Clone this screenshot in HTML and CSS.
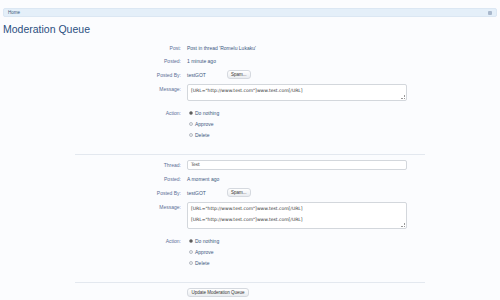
FILE: index.html
```html
<!DOCTYPE html>
<html>
    <head>
        <meta charset="utf-8">
        <title>Moderation Queue</title>
        <link rel="stylesheet" href="styles.css">
    </head>
    <body>
        <div class="breadcrumb">
            <span class="crumb">Home</span>
            <span class="jump"></span>
        </div>
        <h1 class="title">Moderation Queue</h1>

        <form class="queue">
            <div class="item">
                <div class="row"><span class="label">Post:</span><span class="value">Post in thread 'Romelu Lukaku'</span></div>
                <div class="row"><span class="label">Posted:</span><span class="value">1 minute ago</span></div>
                <div class="row"><span class="label">Posted By:</span><span class="value"><span class="user">testGOT</span><span class="btn">Spam...</span></span></div>
                <div class="row msg"><span class="label">Message:</span><div class="textarea short">[URL="http://www.test.com"]www.test.com[/URL]</div></div>
                <div class="row act"><span class="label">Action:</span>
                    <div class="radios">
                        <div class="radio"><span class="dot on"></span>Do nothing</div>
                        <div class="radio"><span class="dot"></span>Approve</div>
                        <div class="radio"><span class="dot"></span>Delete</div>
                    </div>
                </div>
            </div>

            <div class="item">
                <div class="row"><span class="label">Thread:</span><div class="input">Test</div></div>
                <div class="row"><span class="label">Posted:</span><span class="value">A moment ago</span></div>
                <div class="row"><span class="label">Posted By:</span><span class="value"><span class="user">testGOT</span><span class="btn">Spam...</span></span></div>
                <div class="row msg"><span class="label">Message:</span><div class="textarea tall">[URL="http://www.test.com"]www.test.com[/URL]<br>[URL="http://www.test.com"]www.test.com[/URL]</div></div>
                <div class="row act"><span class="label">Action:</span>
                    <div class="radios">
                        <div class="radio"><span class="dot on"></span>Do nothing</div>
                        <div class="radio"><span class="dot"></span>Approve</div>
                        <div class="radio"><span class="dot"></span>Delete</div>
                    </div>
                </div>
            </div>

            <div class="submit">
                <span class="btn wide">Update Moderation Queue</span>
            </div>
        </form>
    </body>
</html>
```

FILE: styles.css
```css
*{
    box-sizing: border-box;
    margin: 0px;
    padding: 0px;
}
body
{
    background: #fbfcfe;
    font-family: "Liberation Sans", sans-serif;
    font-size: 5px;
    color: #2b485c;
    padding: 8px 3px 0 3px;
}
.breadcrumb
{
    height: 9px;
    background: #e4eff9;
    border: 1px solid #dbe7f3;
    border-radius: 2px;
    display: flex;
    align-items: center;
    justify-content: space-between;
    padding: 0 4px 0 4px;
}
.crumb
{
    color: #3a5577;
    font-size: 4.5px;
}
.jump
{
    width: 4px;
    height: 4px;
    background: #a9b8cc;
    border-radius: 1px;
}
.title
{
    font-family: "Liberation Sans", sans-serif;
    font-weight: normal;
    font-size: 10.5px;
    color: #2b4f7e;
    margin-top: 6px;
    line-height: 12px;
}
.queue
{
    width: 350px;
    margin: 9px 0 0 72px;
}
.item
{
    border-bottom: 1px solid #e3e8ef;
    padding-bottom: 10px;
    margin-bottom: 5px;
}
.row
{
    display: grid;
    grid-template-columns: 106px 220px;
    column-gap: 6px;
    line-height: 8px;
    margin-bottom: 5px;
    align-items: center;
}
.label
{
    text-align: right;
    color: #5b6f96;
}
.value
{
    color: #3b5880;
    display: flex;
    align-items: center;
}
.user
{
    width: 40px;
}
.btn
{
    display: inline-block;
    height: 9px;
    line-height: 8px;
    padding: 0 3px;
    font-size: 4.5px;
    color: #333;
    background: linear-gradient(#ffffff, #e9ecf0);
    border: 1px solid #d5d9df;
    border-radius: 3px;
}
.wide
{
    width: 62px;
    text-align: center;
    padding: 0;
}
.msg
{
    align-items: start;
}
.msg .label
{
    line-height: 11px;
}
.textarea, .input
{
    background: #fff;
    border: 1px solid #d3d7dc;
    border-radius: 2px;
    color: #333;
    font-family: "DejaVu Sans", sans-serif;
    font-size: 4.5px;
    padding: 0 3px;
}
.textarea
{
    line-height: 11px;
    position: relative;
}
.textarea::after
{
    content: "";
    position: absolute;
    right: 1px;
    bottom: 1px;
    width: 3px;
    height: 3px;
    border-right: 1px dotted #999;
    border-bottom: 1px dotted #999;
}
.short
{
    height: 17px;
}
.tall
{
    height: 27px;
}
.input
{
    height: 10px;
    line-height: 8px;
}
.act
{
    align-items: start;
    margin-top: 8px;
}
.radios
{
    display: flex;
    flex-direction: column;
    row-gap: 3px;
    color: #3b5880;
}
.radio
{
    display: flex;
    align-items: center;
    column-gap: 2px;
    height: 8px;
}
.dot
{
    width: 4px;
    height: 4px;
    border-radius: 50%;
    border: 1px solid #b9bec6;
    background: #eceef1;
    margin-left: 2px;
}
.dot.on
{
    background: #444;
    border-color: #999;
}
.submit
{
    padding-left: 112px;
}
```
